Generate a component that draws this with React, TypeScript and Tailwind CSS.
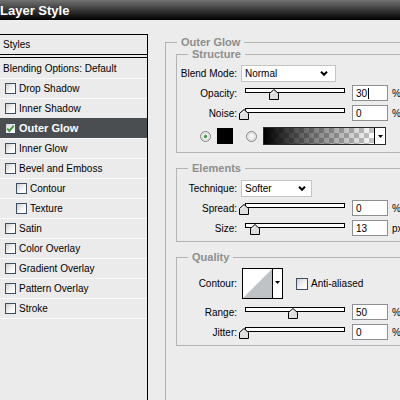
import React from "react";

type Effect = {
  label: string;
  indent?: boolean;
  checked?: boolean;
  selected?: boolean;
};

const effects: Effect[] = [
  { label: "Drop Shadow" },
  { label: "Inner Shadow" },
  { label: "Outer Glow", checked: true, selected: true },
  { label: "Inner Glow" },
  { label: "Bevel and Emboss" },
  { label: "Contour", indent: true },
  { label: "Texture", indent: true },
  { label: "Satin" },
  { label: "Color Overlay" },
  { label: "Gradient Overlay" },
  { label: "Pattern Overlay" },
  { label: "Stroke" },
];

const CheckBox = ({ checked, className }: { checked?: boolean; className: string }) => (
  <span
    className={`flex shrink-0 items-center justify-center border border-[#3b4f67] bg-[linear-gradient(135deg,#cfd0d2,#f7f7f7_60%,#ffffff)] ${className}`}
  >
    {checked && (
      <svg width="9" height="9" viewBox="0 0 9 9">
        <path d="M1.2 4.6 L3.4 7 L7.8 1.6" fill="none" stroke="#3f9a3f" strokeWidth="2" />
      </svg>
    )}
  </span>
);

const Radio = ({ on }: { on?: boolean }) => (
  <svg width="11" height="11" viewBox="0 0 11 11" className="shrink-0">
    <circle cx="5.5" cy="5.5" r="5" fill="#f3f3f3" stroke="#7f8184" />
    <circle cx="5.5" cy="5.5" r="3.6" fill="none" stroke="#dadada" />
    {on && <circle cx="5.5" cy="5.5" r="1.7" fill="#3f9a3f" />}
  </svg>
);

const DownArrow = () => (
  <svg width="5" height="3" viewBox="0 0 5 3">
    <polygon points="0,0 5,0 2.5,3" fill="#000" />
  </svg>
);

const Chevron = () => (
  <svg width="8" height="5" viewBox="0 0 8 5" className="shrink-0">
    <path d="M1 0.8 L4 3.8 L7 0.8" fill="none" stroke="#000" strokeWidth="2" />
  </svg>
);

// slider track with the little pentagon thumb riding under it
const Slider = ({ value }: { value: number }) => (
  <div className="relative h-[20px] w-[108px] shrink-0">
    <div className="absolute left-[4px] top-[5px] h-[5px] w-[100px] border border-black bg-white" />
    <svg
      className="absolute top-[6px]"
      style={{ left: Math.round(3 + value * 100 - 5) }}
      width="10"
      height="11"
      viewBox="0 0 10 11"
    >
      <path d="M5 0.5 L9.5 4.5 V10.5 H0.5 V4.5 Z" fill="#dedede" stroke="#000" />
      <path d="M2 5 L5 2.2" fill="none" stroke="#fff" />
    </svg>
  </div>
);

const NumBox = ({ value, caret }: { value: string; caret?: boolean }) => (
  <div className="ml-[3px] flex h-[16px] w-[36px] shrink-0 items-center border border-[#8d9195] bg-white pl-[3px]">
    <span>{value}</span>
    {caret && <span className="ml-[1px] h-[11px] w-[1px] bg-black" />}
  </div>
);

const Row = ({ label, children }: { label: string; children: React.ReactNode }) => (
  <div className="flex h-[20px] items-center">
    <span className="w-[60px] shrink-0 text-right">{label}</span>
    <div className="ml-[4px] flex items-center">{children}</div>
  </div>
);

const SliderRow = ({
  label,
  value,
  text,
  unit,
  caret,
}: {
  label: string;
  value: number;
  text: string;
  unit: string;
  caret?: boolean;
}) => (
  <Row label={label}>
    <Slider value={value} />
    <NumBox value={text} caret={caret} />
    <span className="ml-[4px]">{unit}</span>
  </Row>
);

const Group = ({
  title,
  className,
  children,
}: {
  title: string;
  className: string;
  children: React.ReactNode;
}) => (
  <fieldset className={`w-full border border-[#b3b3b3] ${className}`}>
    <legend className="ml-[11px] px-[4px] text-[11px] font-bold leading-[12px] text-[#8e8e8e]">
      {title}
    </legend>
    {children}
  </fieldset>
);

export default function App() {
  return (
    <div className="h-[400px] w-[400px] overflow-hidden bg-[#ececec] font-['Liberation_Sans',Arial,sans-serif] text-[10px] text-black">
      <div className="h-[20px] bg-[linear-gradient(#727272,#2c2c2c_60%,#000)] pt-[1px] text-[13px] font-bold leading-[19px] text-white">
        Layer Style
      </div>

      <div className="flex h-[380px]">
        {/* effect list */}
        <div className="mt-[14px] w-[148px] shrink-0 border-r border-t border-black bg-[#ebebeb]">
          <div className="flex h-[20px] items-center border-b border-black pl-[3px]">Styles</div>
          <div className="h-[2px]" />
          <div className="flex h-[21px] items-center border-t border-black pl-[3px]">
            Blending Options: Default
          </div>
          {effects.map((e) => (
            <div
              key={e.label}
              className={`flex h-[20px] items-center gap-[3px] border-t ${
                e.indent ? "pl-[16px]" : "pl-[5px]"
              } ${
                e.selected
                  ? "border-[#4b4e51] bg-[#4b4e51] text-[11px] font-bold text-white"
                  : "border-[#fbfbfb]"
              }`}
            >
              <CheckBox checked={e.checked} className="h-[11px] w-[11px]" />
              <span>{e.label}</span>
            </div>
          ))}
          <div className="border-t border-[#fbfbfb]" />
        </div>

        {/* settings */}
        <fieldset className="ml-[17px] mt-[16px] h-[380px] w-[260px] shrink-0 border border-[#b3b3b3] pl-[10px]">
          <legend className="ml-[1px] px-[4px] text-[11px] font-bold leading-[12px] text-[#8e8e8e]">
            Outer Glow
          </legend>

          <Group title="Structure" className="pb-[3px] pt-[3px]">
            <Row label="Blend Mode:">
              <div className="flex h-[17px] w-[95px] items-center justify-between border border-[#c4c4c4] bg-white pl-[3px] pr-[7px]">
                <span>Normal</span>
                <Chevron />
              </div>
            </Row>
            <SliderRow label="Opacity:" value={0.3} text="30" unit="%" caret />
            <SliderRow label="Noise:" value={0} text="0" unit="%" />
            <div className="flex h-[26px] items-center">
              <span className="ml-[23px]">
                <Radio on />
              </span>
              <div className="ml-[6px] h-[16px] w-[16px] bg-black" />
              <span className="ml-[13px]">
                <Radio />
              </span>
              <div className="ml-[6px] flex h-[18px] w-[123px] border border-[#2a2a2a]">
                <div className="flex-1 [background-image:linear-gradient(to_right,#000,rgba(0,0,0,0.55)_40%,rgba(0,0,0,0)),repeating-conic-gradient(#c6c6c6_0_25%,#ffffff_0_50%)] [background-size:100%_100%,10px_10px]" />
                <div className="flex w-[11px] items-center justify-center border-l border-black bg-white">
                  <DownArrow />
                </div>
              </div>
            </div>
          </Group>

          <Group title="Elements" className="mt-[9px] pb-[3px] pt-[4px]">
            <Row label="Technique:">
              <div className="flex h-[17px] w-[71px] items-center justify-between border border-[#c4c4c4] bg-white pl-[3px] pr-[5px]">
                <span>Softer</span>
                <Chevron />
              </div>
            </Row>
            <SliderRow label="Spread:" value={0} text="0" unit="%" />
            <SliderRow label="Size:" value={0.11} text="13" unit="px" />
          </Group>

          <Group title="Quality" className="mt-[9px] pb-[3px] pt-[5px]">
            <div className="flex h-[31px] items-center">
              <span className="w-[60px] shrink-0 text-right">Contour:</span>
              <div className="ml-[5px] flex h-[31px] w-[41px] border border-black bg-white">
                <svg width="29" height="29" viewBox="0 0 29 29" className="shrink-0">
                  <polygon points="0,29 29,0 29,29" fill="#bfc3c5" />
                </svg>
                <div className="flex flex-1 justify-center border-l border-black pt-[12px]">
                  <DownArrow />
                </div>
              </div>
              <CheckBox className="ml-[13px] h-[12px] w-[12px]" />
              <span className="ml-[3px]">Anti-aliased</span>
            </div>
            <div className="mt-[3px]">
              <SliderRow label="Range:" value={0.49} text="50" unit="%" />
              <SliderRow label="Jitter:" value={0} text="0" unit="%" />
            </div>
          </Group>
        </fieldset>
      </div>
    </div>
  );
}
